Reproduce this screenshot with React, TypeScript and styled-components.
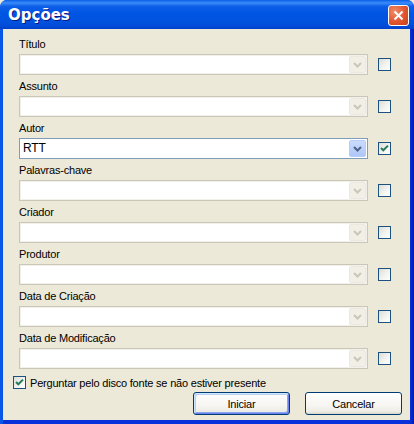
import React from "react";
import styled, { createGlobalStyle } from "styled-components";

const GlobalStyle = createGlobalStyle`
  html, body {
    margin: 0;
    padding: 0;
    background: #ece9d8;
  }
  body {
    font-family: "Liberation Sans", Arial, sans-serif;
    font-size: 11px;
    letter-spacing: -0.2px;
    color: #000;
  }
`;

const fields = [
  { label: "Título", value: "", enabled: false },
  { label: "Assunto", value: "", enabled: false },
  { label: "Autor", value: "RTT", enabled: true },
  { label: "Palavras-chave", value: "", enabled: false },
  { label: "Criador", value: "", enabled: false },
  { label: "Produtor", value: "", enabled: false },
  { label: "Data de Criação", value: "", enabled: false },
  { label: "Data de Modificação", value: "", enabled: false },
];

const Arrow: React.FC<{ enabled: boolean }> = ({ enabled }) => (
  <svg width="9" height="6" viewBox="0 0 9 6">
    <path
      d="M1 1 L4.5 4.5 L8 1"
      fill="none"
      stroke={enabled ? "#4d6185" : "#c9c7ba"}
      strokeWidth="2"
    />
  </svg>
);

const CheckMark = () => (
  <svg width="11" height="11" viewBox="0 0 11 11">
    <path d="M2 5 L4.3 7.3 L9 2.6" fill="none" stroke="#2a7a5e" strokeWidth="2" />
  </svg>
);

const App: React.FC = () => {
  return (
    <>
      <GlobalStyle />
      <Window>
        <TitleBar>
          <Title>Opções</Title>
          <CloseButton>
            <svg width="11" height="11" viewBox="0 0 11 11">
              <path d="M1.5 1.5 L9.5 9.5 M9.5 1.5 L1.5 9.5" stroke="#fff" strokeWidth="2" />
            </svg>
          </CloseButton>
        </TitleBar>
        <Body>
          <Fields>
            {fields.map((f) => (
              <Field key={f.label}>
                <Label>{f.label}</Label>
                <FieldRow>
                  <Combo $enabled={f.enabled}>
                    <ComboValue>{f.value}</ComboValue>
                    <DropButton $enabled={f.enabled}>
                      <Arrow enabled={f.enabled} />
                    </DropButton>
                  </Combo>
                  <CheckBox>{f.enabled && <CheckMark />}</CheckBox>
                </FieldRow>
              </Field>
            ))}
          </Fields>
          <CheckRow>
            <CheckBox>
              <CheckMark />
            </CheckBox>
            <span>Perguntar pelo disco fonte se não estiver presente</span>
          </CheckRow>
          <ButtonRow>
            <Button $default>Iniciar</Button>
            <Button>Cancelar</Button>
          </ButtonRow>
        </Body>
      </Window>
    </>
  );
};

export default App;

const Window = styled.div`
  width: 414px;
  height: 424px;
  display: flex;
  flex-direction: column;
  background: linear-gradient(
    to right,
    #0a5ae8 0px,
    #0653e6 3px,
    #0831d9 3px,
    #0831d9 410px,
    #0625c8 412px,
    #001ea8 414px
  );
  border-radius: 7px 7px 0 0;
  overflow: hidden;
`;

const TitleBar = styled.div`
  height: 29px;
  flex: none;
  display: flex;
  align-items: center;
  justify-content: space-between;
  padding: 0 5px 0 8px;
  background: linear-gradient(
    to bottom,
    #0a5ee6 0%,
    #3a8cfa 10%,
    #0d5fe8 22%,
    #0055e3 45%,
    #0052de 75%,
    #0049d6 92%,
    #003fc9 100%
  );
`;

const Title = styled.div`
  font-family: "DejaVu Sans", Verdana, sans-serif;
  font-weight: bold;
  font-size: 15px;
  letter-spacing: 0;
  color: #fff;
  text-shadow: 1px 1px 0 #0a1883;
  margin-top: 1px;
`;

const CloseButton = styled.div`
  width: 19px;
  height: 19px;
  margin-top: 2px;
  border: 1px solid #fff;
  border-radius: 3px;
  display: flex;
  align-items: center;
  justify-content: center;
  background: radial-gradient(circle at 30% 30%, #f08c6a 0%, #e0552f 55%, #c6401c 100%);
`;

const Body = styled.div`
  flex: 1;
  margin: 0 4px 4px 3px;
  background: #ece9d8;
  padding: 9px 8px 5px 10px;
  display: flex;
  flex-direction: column;
`;

const Fields = styled.div`
  display: flex;
  flex-direction: column;
  padding-left: 6px;
  margin-right: 11px;
`;

const Field = styled.div`
  display: flex;
  flex-direction: column;
  margin-bottom: 5px;
`;

const Label = styled.div`
  line-height: 13px;
  height: 13px;
  margin-bottom: 3px;
`;

const FieldRow = styled.div`
  display: flex;
  align-items: center;
  gap: 10px;
`;

const Combo = styled.div<{ $enabled: boolean }>`
  flex: 1;
  height: 21px;
  box-sizing: border-box;
  display: flex;
  align-items: stretch;
  background: #fff;
  border: 1px solid ${(p) => (p.$enabled ? "#7f9db9" : "#cbc7b8")};
  box-shadow: ${(p) => (p.$enabled ? "none" : "inset 0 0 0 1px #f2f0ea")};
`;

const ComboValue = styled.div`
  flex: 1;
  padding-left: 3px;
  font-size: 12px;
  line-height: 19px;
`;

const DropButton = styled.div<{ $enabled: boolean }>`
  width: 17px;
  margin: 1px;
  display: flex;
  align-items: center;
  justify-content: center;
  border-radius: 2px;
  background: ${(p) =>
    p.$enabled
      ? "linear-gradient(to bottom, #cadbfd 0%, #b9cffb 60%, #aec6f8 100%)"
      : "#f1efe6"};
  border: 1px solid ${(p) => (p.$enabled ? "#b6cbf5" : "#ebe9df")};
  box-sizing: border-box;
`;

const CheckBox = styled.div`
  width: 13px;
  height: 13px;
  flex: none;
  box-sizing: border-box;
  border: 1px solid #1c5180;
  background: linear-gradient(135deg, #dcdcd7 0%, #f3f3f0 55%, #ffffff 100%);
  display: flex;
  align-items: center;
  justify-content: center;
`;

const CheckRow = styled.div`
  display: flex;
  align-items: center;
  gap: 4px;
  height: 13px;
  margin-top: 2px;
`;

const ButtonRow = styled.div`
  display: flex;
  justify-content: flex-end;
  gap: 15px;
  margin-top: 3px;
`;

const Button = styled.button<{ $default?: boolean }>`
  width: 97px;
  height: 23px;
  font-family: "Liberation Sans", Arial, sans-serif;
  font-size: 11px;
  letter-spacing: -0.2px;
  color: #000;
  border: 1px solid #003c74;
  border-radius: 3px;
  padding: 0;
  background: linear-gradient(to bottom, #ffffff 0%, #f6f5f1 60%, #ecebe4 90%, #d6d0c5 100%);
  box-shadow: ${(p) =>
    p.$default
      ? "inset 1px 1px 0 #cee7ff, inset -1px -1px 0 #6982ee, inset 2px 2px 0 #bccef3, inset -2px -2px 0 #8aa5ee"
      : "none"};
`;
